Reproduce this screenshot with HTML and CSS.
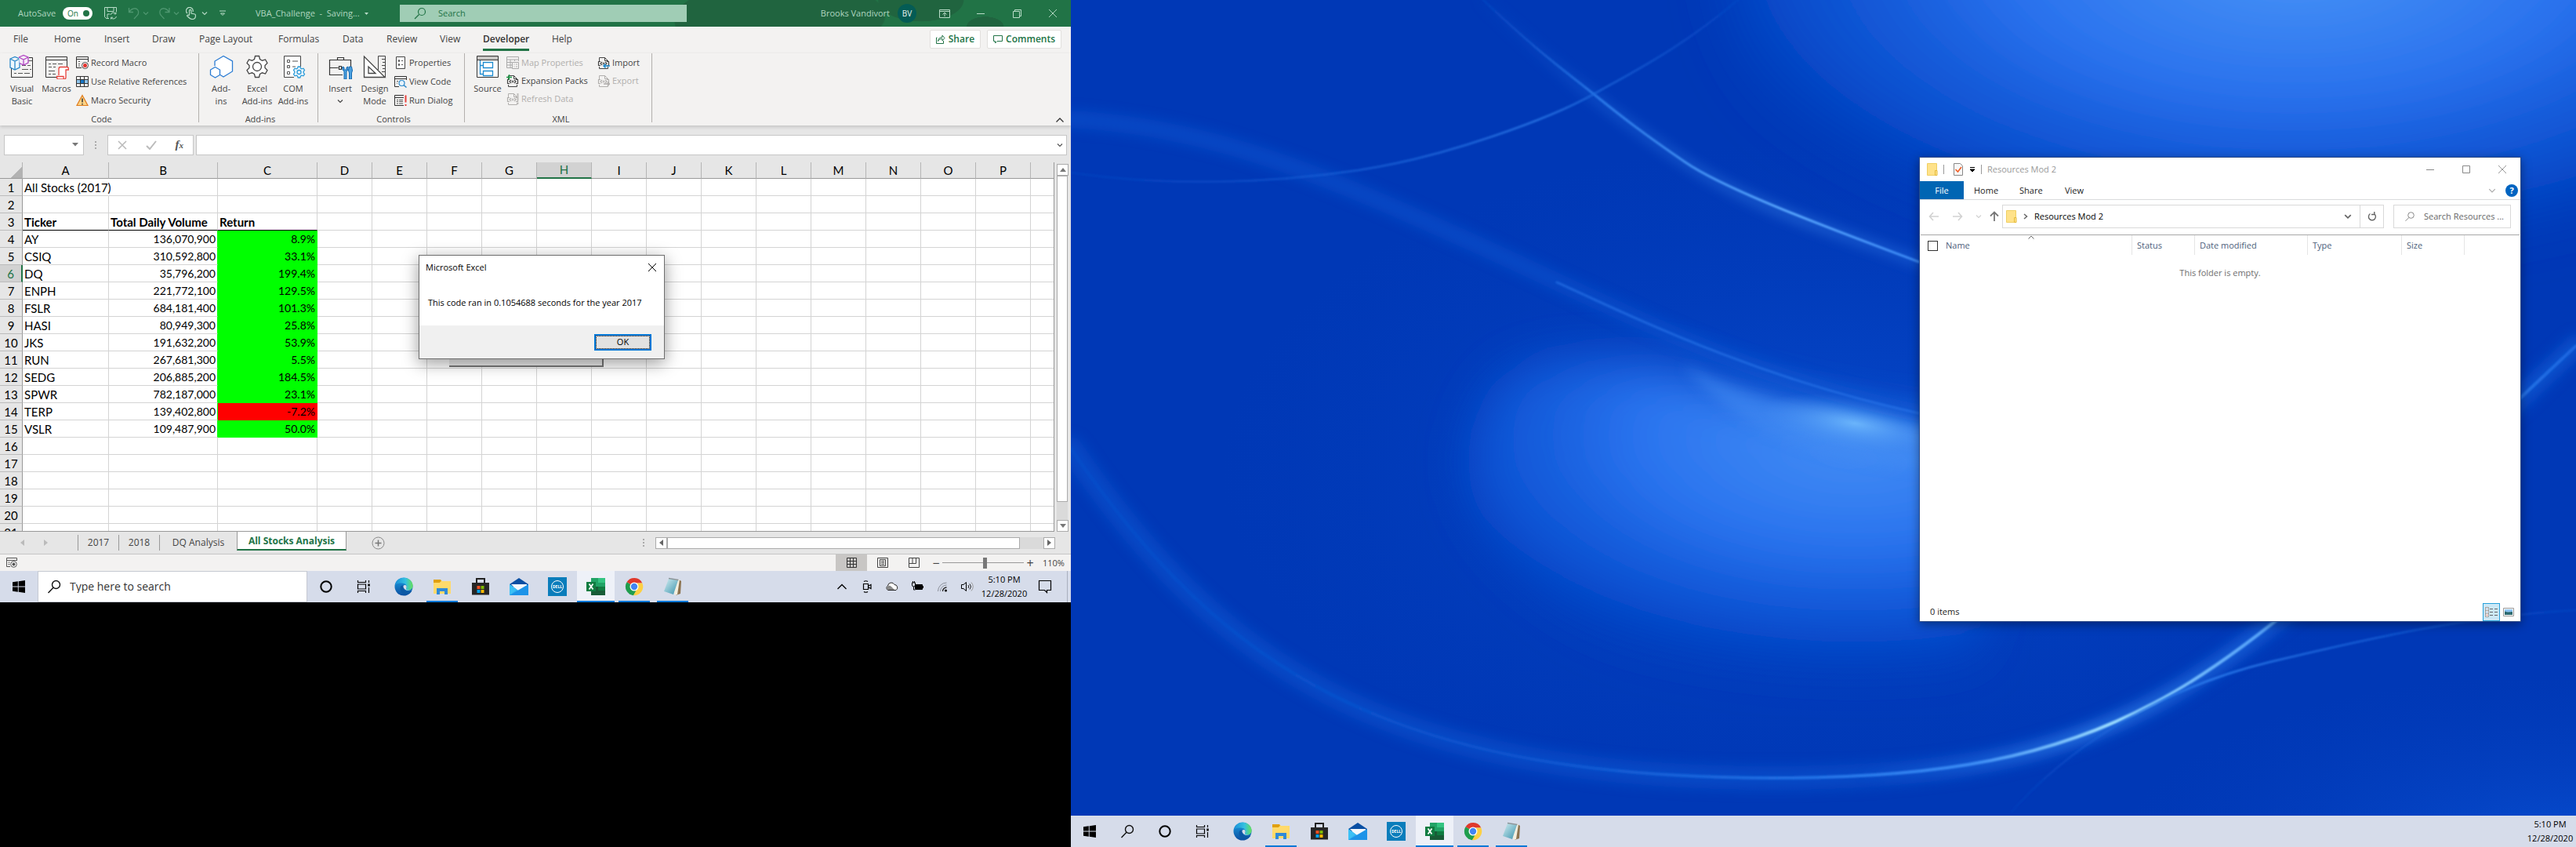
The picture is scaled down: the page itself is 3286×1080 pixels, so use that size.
FILE: index.html
```html
<!DOCTYPE html>
<html lang="en">
<head>
<meta charset="utf-8">
<title>VBA_Challenge - Excel</title>
<link rel="stylesheet" href="styles.css">
</head>
<body>
<svg class="sprite" aria-hidden="true">
  <defs>
    <linearGradient id="edge-a" x1="0" y1="0" x2="1" y2="0"><stop offset="0" stop-color="#1a8fd8"/><stop offset=".6" stop-color="#35c1e0"/><stop offset="1" stop-color="#66e05a"/></linearGradient>
    <linearGradient id="edge-b" x1="0" y1="0" x2="0" y2="1"><stop offset="0" stop-color="#1b9de2"/><stop offset="1" stop-color="#0b4fa0"/></linearGradient>
    <linearGradient id="note-a" x1="0" y1="0" x2="1" y2="1"><stop offset="0" stop-color="#d3eef2"/><stop offset="1" stop-color="#3b93ad"/></linearGradient>
  </defs>
  <symbol id="i-start" viewBox="0 0 24 24"><path d="M4 6.3l6.8-1v6.2H4zM11.700 5.200L20 4v7.500h-8.300zM4 12.500h6.800v6.200l-6.800-1zM11.700 12.500H20V20l-8.300-1.200z" fill="#000"/></symbol>
  <symbol id="i-search" viewBox="0 0 24 24"><g fill="none" stroke="#111" stroke-width="1.400"><circle cx="14.500" cy="9.500" r="5"/><path d="M11 13.200L4.500 20"/></g></symbol>
  <symbol id="i-cortana" viewBox="0 0 24 24"><circle cx="12" cy="12" r="6.700" fill="none" stroke="#000" stroke-width="2"/></symbol>
  <symbol id="i-task" viewBox="0 0 24 24"><g fill="none" stroke="#000" stroke-width="1.200"><path d="M4.500 4v2.500h10V4M4.500 20v-2.500h10V20M4.500 9h10v6h-10zM18.500 4v3M18.500 13v7"/></g><path d="M17.300 8.500h2.500v3h-2.500z"/></symbol>
  <symbol id="i-edge" viewBox="0 0 24 24"><circle cx="12" cy="12" r="11.500" fill="url(#edge-b)"/><path d="M1 10C3 2.500 10-.8 16 1.300c5 1.700 8 6 7.500 10.200-.4 3.500-3 5.200-6 5.200-2.500 0-3.500-1.200-2.500-2.500 1.500-2 .5-5.500-3-6.200C7 7 2.500 8 1 10z" fill="url(#edge-a)"/><path d="M8 12c-1.500 4 1 8.500 5.500 9.500 4 .8 7.500-1.500 9-4-3 1.500-7 1.500-9-.5-1.500-1.500-1.500-3 0-5-1.500-2-4.500-2-5.500 0z" fill="#0c59a4"/><path d="M15 14.200c1.300-2 .4-4.200-1.700-4.200-2.200 0-2.700 3 .2 5.500 1.800 1.600 5.500 2 8.500.3-2 1.100-7.800 1.400-7-1.600z" fill="#d6dcea"/></symbol>
  <symbol id="i-folder" viewBox="0 0 24 24"><path d="M1 3h9l2 2h11v16H1z" fill="#ffd75e"/><path d="M1 3h9l1 2-2 2H1z" fill="#e0a010"/><path d="M1 7h8l2-2h12v16H1z" fill="#ffda6b"/><path d="M5 14h14v8h-4v-4H9v4H5z" fill="#2f8ad8"/></symbol>
  <symbol id="i-store" viewBox="0 0 24 24"><path d="M7 8V2h10v6" fill="none" stroke="#222" stroke-width="2"/><path d="M1 7h22v15.500H1z" fill="#262626"/><path d="M7.500 11h4v4h-4z" fill="#f25022"/><path d="M12.500 11h4v4h-4z" fill="#7fba00"/><path d="M7.500 16h4v4h-4z" fill="#00a4ef"/><path d="M12.500 16h4v4h-4z" fill="#ffb900"/></symbol>
  <symbol id="i-mail" viewBox="0 0 24 24"><path d="M0 9l12-8 12 8v3H0z" fill="#0a4fa3"/><path d="M2 9h20v6l-10 4z" fill="#f4f8fc"/><path d="M0 9l12 8.500V23H0z" fill="#32b3f0"/><path d="M24 9v14H0z" fill="#1d93e8"/><path d="M0 9l9 6.500L0 23z" fill="#3bc0f5"/></symbol>
  <symbol id="i-excel" viewBox="0 0 24 24"><path d="M6 1h18v22H6z" fill="#21a366"/><path d="M15 1h9v6h-9z" fill="#33c481"/><path d="M6 12h9v5H6z" fill="#185c37"/><path d="M15 12h9v5h-9z" fill="#107c41"/><path d="M6 17h18v6H6z" fill="#185c37"/><path d="M0 6h12v12H0z" fill="#107c41"/><path d="M3.500 8.500l5 7M8.500 8.500l-5 7" stroke="#fff" stroke-width="1.800"/></symbol>
  <symbol id="i-chrome" viewBox="0 0 24 24"><path d="M12 12L2.500 6.200A11.300 11.300 0 0 1 22.300 7.500H12z" fill="#e0392c"/><path d="M12 12L2.500 6.200A11.300 11.300 0 0 0 11 23.300l4-6z" fill="#1f9d4d"/><path d="M22.300 7.500A11.300 11.300 0 0 1 11 23.300L16 14V7.500z" fill="#fdd043"/><circle cx="12" cy="12" r="5.500" fill="#fff"/><circle cx="12" cy="12" r="4.200" fill="#4285f4"/></symbol>
  <symbol id="i-note" viewBox="0 0 24 24"><path d="M20 3l3 2-1 16-6 2z" fill="#8c7350"/><path d="M8 2l13 1-3 19-3 1z" fill="#f3efe0"/><path d="M7 2l12 2-6 18L1 18z" fill="url(#note-a)"/><path d="M7 1.500l12.500 2" stroke="#8a9499" stroke-width="1.500"/></symbol>
  <symbol id="i-down" viewBox="0 0 8 8"><path d="M1 2.500l3 3 3-3" fill="none" stroke="currentColor" stroke-width="1.200"/></symbol>
  <symbol id="i-x" viewBox="0 0 12 12"><path d="M1 1l10 10M11 1L1 11" fill="none" stroke="currentColor"/></symbol>
  <symbol id="i-dir" viewBox="0 0 14 16"><path d="M.5.500h12v15H.500z" fill="#ffe28a" stroke="#f0cf62"/><path d="M10.500 9.500h2.500v6h-2.500z" fill="#ffe28a" stroke="#e5bb3b"/></symbol>
  <symbol id="i-xml" viewBox="0 0 16 16"><g fill="none" stroke="currentColor"><path d="M2.500 6V1.500h7l4 4V6M9.500 1.500v4h4M2.500 13v2.500h11V13"/><path d="M4 6.500H1.500v5H4M12 6.500h2.500v5H12M6 7L4 9l2 2M10 7l2 2-2 2" stroke-width="1.200"/><circle cx="8" cy="9" r="1"/></g></symbol>
</svg>

<main class="desktop">
  <section class="screen laptop" aria-label="Laptop screen">
    <div class="excel">
      <header class="titlebar">
        <div class="quick">
          <span>AutoSave</span>
          <button class="switch" role="switch" aria-checked="true"><span>On</span><i></i></button>
          <button aria-label="Save"><svg width="16" height="16" viewBox="0 0 16 16"><path d="M6 14.500H2.500l-2-2V.5h15V6M4 .5v5h8v-5M4 14v-5h3M8 10a4 4 0 0 1 7-1.500V6.500M15 8.800h-2.500M15.500 12a4 4 0 0 1-7 1.500v2M8.500 13.200H11" fill="none" stroke="#b9dcc8"/></svg></button>
          <button aria-label="Undo"><svg width="16" height="16" viewBox="0 0 16 16"><path d="M1.500 1v5.500H7M1.500 6.500C5 1 11 .5 13 4s.5 5.500-5 11" fill="none" stroke="#4f9770" stroke-width="1.300"/></svg></button>
          <button class="dim" aria-label="Undo list"><svg width="8" height="8"><use href="#i-down"/></svg></button>
          <button aria-label="Redo"><svg width="16" height="16" viewBox="0 0 16 16"><path d="M14 1v5.500H8.500M14 6.500C10.500 1 4.500.500 2.500 4S2 9.500 7.500 15" fill="none" stroke="#4f9770" stroke-width="1.300"/></svg></button>
          <button class="dim" aria-label="Redo list"><svg width="8" height="8"><use href="#i-down"/></svg></button>
          <button aria-label="Touch mode"><svg width="14" height="16" viewBox="0 0 14 16"><path d="M2 8a4.300 4.300 0 1 1 7-2M4.500 10V4.500a1.200 1.200 0 0 1 2.400 0V8l4.600 1c1 .3 1 1 1 2 0 2.500-1.500 4.500-4.500 4.500S4 13.500 1.500 11c1-1.500 2-1 3 0" fill="none" stroke="#b9dcc8" stroke-width="1.200"/></svg></button>
          <button aria-label="Touch list"><svg width="8" height="8"><use href="#i-down"/></svg></button>
          <button aria-label="Customize toolbar"><svg width="8" height="8" viewBox="0 0 8 8"><path d="M0 1h8M1.500 4L4 6.500 6.500 4z" stroke="#b9dcc8" fill="none"/></svg></button>
          <span>VBA_Challenge&nbsp; -&nbsp; Saving...&nbsp; <svg width="7" height="4" viewBox="0 0 7 4" class="mid"><path d="M1 0h5L3.500 3z" fill="#b9dcc8"/></svg></span>
        </div>
        <label class="tellme"><svg width="16" height="16" viewBox="0 0 16 16"><circle cx="10" cy="6" r="4.500" fill="none" stroke="#217346" stroke-width="1.200"/><path d="M6.500 9.500L1 15" stroke="#217346" stroke-width="1.200"/></svg><input type="text" placeholder="Search" aria-label="Search"></label>
        <div class="account">
          <span>Brooks Vandivort</span><span class="avatar">BV</span>
          <button aria-label="Ribbon display"><svg width="14" height="11" viewBox="0 0 14 11"><path d="M.5.500h13v10H.500zM.5 2.500h13M7 9V4M4.500 6.500L7 4l2.500 2.500" fill="none" stroke="#b9dcc8"/></svg></button>
          <button aria-label="Minimize"><svg width="10" height="10"><path d="M0 5.500h10" stroke="#b9dcc8"/></svg></button>
          <button aria-label="Restore"><svg width="11" height="11"><path d="M.5 2.500h8v8h-8zM2.500 2.500v-2h8v8h-2" fill="none" stroke="#b9dcc8"/></svg></button>
          <button aria-label="Close"><svg width="12" height="12"><use href="#i-x"/></svg></button>
        </div>
      </header>

      <div class="tabrow">
        <nav class="tabs">
          <a href="#">File</a><a href="#">Home</a><a href="#">Insert</a><a href="#">Draw</a><a href="#">Page Layout</a><a href="#">Formulas</a><a href="#">Data</a><a href="#">Review</a><a href="#">View</a><a href="#" class="on">Developer</a><a href="#">Help</a>
        </nav>
        <button class="pill"><svg width="12" height="12" viewBox="0 0 12 12"><path d="M1.500 4H.500v7.500h9V8M2.500 8.500C3 5 5 3.500 8 3.500V1l3 3.500L8 8V5.500C5.500 5.500 4 6 2.500 8.500z" fill="none" stroke="#217346"/></svg>Share</button>
        <button class="pill"><svg width="12" height="12" viewBox="0 0 12 12"><path d="M.5 1.500h11v7H5L2.500 11V8.500h-2z" fill="none" stroke="#217346"/></svg>Comments</button>
      </div>

      <div class="ribbon">
        <section class="group code">
          <div class="tools">
            <button class="big"><svg width="32" height="32" viewBox="0 0 32 32"><path d="M2.500 17v12.500h27v-25H25" fill="none" stroke="#333"/><path d="M24 8.500h5M16 14.500h5M23 14.500h4M16 19.500h8M26 19.500h2M6 24.500h3M11 24.500h6M19 24.500h7" stroke="#555"/><path d="M1 6l6-2.500L13 6v11l-6 3-6-3zM1 6l6 3 6-3M7 9v11" fill="#eef7fd" stroke="#2b88c9" stroke-width="1.300"/><path d="M12 4l6-2.500L24 4v7l-6 3-5-2.500M12 4l6 3 6-3M18 7v7" fill="#f6eaf8" stroke="#b146c2" stroke-width="1.300"/></svg>Visual<br>Basic</button>
            <button class="big"><svg width="32" height="32" viewBox="0 0 32 32"><path d="M17 29.500H2.500v-26h27V16M2.500 7.500h27" fill="none" stroke="#333"/><path d="M6 12.500h3M11 12.500h5M18 12.500h6M6 16.500h4M12 16.500h3M6 21.500h8M6 25.500h3M11 25.500h4" stroke="#555"/><path d="M19 27V19c0-2 1-2.500 2-2.500h9c1 0 1.500 1 1.500 3.500H28v9.500c0 2-1 2.500-2 2.500h-8c-1.500 0-1.500-2-1.500-3.500H25c0 2 0 3 1 3.500" fill="#fff" stroke="#e8413c" stroke-width="1.300"/></svg>Macros</button>
            <div class="stack">
              <button><svg width="16" height="16" viewBox="0 0 16 16"><path d="M7 14.500H.500V.500h15V7M.5 3.500h15" fill="none" stroke="#333"/><path d="M3 6.500h2M3 9.500h2M3 12h2" stroke="#555"/><circle cx="11.500" cy="11.500" r="4" fill="#fff" stroke="#444"/><circle cx="11.500" cy="11.500" r="2.500" fill="#e3322d"/></svg>Record Macro</button>
              <button><svg width="16" height="16" viewBox="0 0 16 16"><path d="M1 5h14v5H1z" fill="#8fc4ec"/><path d="M5.500 5h5v5h-5z" fill="#1976c5"/><path d="M.5 1.500h15v13H.500zM.5 5.500h15M.5 10.500h15M5.500 1v13M10.500 1v13" fill="none" stroke="#333"/></svg>Use Relative References</button>
              <button><svg width="16" height="16" viewBox="0 0 16 16"><path d="M8 1.500l7 13H1z" fill="#fbd385" stroke="#e07b1c" stroke-width="1.200"/><path d="M8 5.500v5M8 12v1.500" stroke="#333" stroke-width="1.500"/></svg>Macro Security</button>
            </div>
          </div>
          <h2>Code</h2>
        </section>
        <section class="group addins">
          <div class="tools">
            <button class="big"><svg width="32" height="32" viewBox="0 0 32 32"><path d="M8 15V9l11-6.500L30.500 9v13L19 29l-4-2.500" fill="#fff" stroke="#2b7cd3" stroke-width="1.300"/><path d="M8.500 16.500l6 3.500v6.500L8.500 30l-6-3.500V20z" fill="#fff" stroke="#2b7cd3" stroke-width="1.300"/></svg>Add-<br>ins</button>
            <button class="big"><svg width="32" height="32" viewBox="0 0 32 32"><path d="M12.500 6.500l1-4h5l1 4 3 1.700 4-1.200 2.500 4.500-3 3v3l3 3-2.500 4.500-4-1.200-3 1.700-1 4h-5l-1-4-3-1.700-4 1.200L3 20.500l3-3v-3l-3-3L5.500 7l4 1.200z" fill="#fff" stroke="#444" stroke-width="1.300"/><circle cx="16" cy="16" r="5.500" fill="none" stroke="#444" stroke-width="1.300"/></svg>Excel<br>Add-ins</button>
            <button class="big"><svg width="32" height="32" viewBox="0 0 32 32"><path d="M17 29.500H4.500v-27h21V16" fill="#fff" stroke="#444"/><path d="M8.500 7.500h3v3h-3zM8.500 14.500h3v3h-3zM8.500 22.500h3v3h-3zM15 9h7M15 16h4" fill="none" stroke="#555"/><path d="M21.500 18l.7-2h2.600l.7 2 1.500.8 2-.6 1.500 2.300-1.300 1.700v1.600l1.300 1.700-1.500 2.300-2-.6-1.500.8-.7 2h-2.600l-.7-2-1.500-.8-2 .6-1.500-2.300 1.300-1.700v-1.600l-1.300-1.700 1.500-2.300 2 .6z" fill="#eef7fd" stroke="#2b9bd8" stroke-width="1.300"/><circle cx="23.500" cy="23" r="2.500" fill="none" stroke="#2b9bd8" stroke-width="1.300"/></svg>COM<br>Add-ins</button>
          </div>
          <h2>Add-ins</h2>
        </section>
        <section class="group controls">
          <div class="tools">
            <button class="big"><svg width="32" height="32" viewBox="0 0 32 32"><path d="M19 26.500H2.500v-19h27V16M12.500 7V4.500h8V7M2.500 17.500h11M18 17.500h3M14.500 15.500h3v4h-3z" fill="none" stroke="#333" stroke-width="1.200"/><path d="M19 16v4l2 2v10h3V22l2-2v-4l-2 1v3h-3v-3zM29 16h1.500l1 5-1 3v8h-3v-8l-1-3 1-5z" fill="#4aa0e0" stroke="#1569b0"/></svg>Insert<br><svg width="8" height="8"><use href="#i-down"/></svg></button>
            <button class="big"><svg width="32" height="32" viewBox="0 0 32 32"><path d="M2.500 3v26.500H29zM8 16v8.500h9z" fill="#fff" stroke="#444" stroke-width="1.300"/><path d="M20.500 20V2.500h9v27M25 6.500h4M26 10.500h3M25 14.500h4M26 18.500h3M25 22.500h4" fill="none" stroke="#444"/></svg>Design<br>Mode</button>
            <div class="stack">
              <button><svg width="16" height="16" viewBox="0 0 16 16"><path d="M2.500.500h11v15h-11z" fill="#fff" stroke="#444"/><path d="M5.500 4.500h1v2h-1zM5.500 9.500h1v2h-1zM9 5.500h2M9 10.500h2" fill="none" stroke="#555"/></svg>Properties</button>
              <button><svg width="16" height="16" viewBox="0 0 16 16"><path d="M6 14.500H.500v-13h15V6M.5 4.500h15" fill="none" stroke="#333"/><path d="M3 7.500h2M3 10h1M7 7h1" stroke="#555"/><circle cx="9.500" cy="10" r="3.500" fill="#e6f3fc" stroke="#2b88c9" stroke-width="1.200"/><path d="M12 12.500l3.500 3" stroke="#2b88c9" stroke-width="1.500"/></svg>View Code</button>
              <button><svg width="16" height="16" viewBox="0 0 16 16"><path d="M12 14.500H.500v-13H12M.5 4.500H12" fill="none" stroke="#333"/><path d="M3 7.500h2M6 7.500h5M3 9.500h2M6 9.500h5M3 12h2M6 12h5" stroke="#555"/><path d="M14.500 1.500v9M14.500 13v2" stroke="#e8413c" stroke-width="2"/></svg>Run Dialog</button>
            </div>
          </div>
          <h2>Controls</h2>
        </section>
        <section class="group xml">
          <div class="tools">
            <button class="big"><svg width="32" height="32" viewBox="0 0 32 32"><path d="M2.500 2.500h27v27h-27z" fill="#fff" stroke="#333"/><path d="M3 3h26v4H3z" fill="#c8c6c4"/><path d="M2.500 7.500h27" stroke="#333"/><path d="M6.500 8v17.500h4M6.500 14.500h4M10.500 10.500h12v7h-12zM10.500 21.500h12v6h-12z" fill="none" stroke="#1e8bd0" stroke-width="1.300"/></svg>Source</button>
            <div class="stack tight">
              <button disabled><svg width="16" height="16" viewBox="0 0 16 16"><path d="M7 14.500H.500V.500h15V6M.5 4h15M.5 7.500H7M.5 11H7M5 4v10M10.500 4v2" fill="none" stroke="#aaa"/><path d="M7.500 7.500h8v8h-8zM9.500 10h1M12 10h2M9.500 13h1M12 13h2" fill="none" stroke="#aaa"/></svg>Map Properties</button>
              <button><svg width="16" height="16"><use href="#i-xml"/><path d="M0 3.500h7M3.500 0v7" stroke="#1e9e4a" stroke-width="1.300"/></svg>Expansion Packs</button>
              <button disabled><svg width="16" height="16"><use href="#i-xml"/><path d="M14.500 1v9M14.500 12.500v2.500" stroke="#c0bebc" stroke-width="2"/></svg>Refresh Data</button>
            </div>
            <div class="stack tight">
              <button><svg width="16" height="16"><use href="#i-xml"/><path d="M16 12H8M10.500 9.500L8 12l2.500 2.500" fill="none" stroke="#1e8bd0" stroke-width="1.500"/></svg>Import</button>
              <button disabled><svg width="16" height="16"><use href="#i-xml"/><path d="M8 12h8M13 9.500l2.500 2.500-2.500 2.500" fill="none" stroke="#b1afad" stroke-width="1.500"/></svg>Export</button>
            </div>
          </div>
          <h2>XML</h2>
        </section>
        <button class="collapse" aria-label="Collapse ribbon"><svg width="10" height="6"><path d="M.5 5.500L5 1l4.500 4.500" fill="none" stroke="#333" stroke-width="1.300"/></svg></button>
      </div>

      <div class="formulabar">
        <label class="box namebox"><input type="text" aria-label="Name box"><svg width="8" height="5"><path d="M0 0h8L4 4.500z" fill="#777"/></svg></label>
        <span class="grip"></span>
        <div class="box fxbox">
          <button aria-label="Cancel"><svg width="12" height="12" viewBox="0 0 12 12"><path d="M1 1l10 10M11 1L1 11" stroke="#bbb" stroke-width="1.600"/></svg></button>
          <button aria-label="Enter"><svg width="14" height="12" viewBox="0 0 14 12"><path d="M1 7l4 4L13 1" fill="none" stroke="#bbb" stroke-width="2"/></svg></button>
          <button aria-label="Insert function" class="fx">f<sub>x</sub></button>
        </div>
        <label class="box formula"><input type="text" aria-label="Formula"><svg width="8" height="8" class="dark"><use href="#i-down"/></svg></label>
      </div>

      <div class="work">
        <div class="sheet">
          <table>
            <colgroup id="cols"></colgroup>
            <thead><tr id="letters"></tr></thead>
            <tbody id="rows"></tbody>
          </table>
          <div class="runbtn"></div>
        </div>
        <div class="vscroll"><button aria-label="Scroll up"><svg width="8" height="5"><path d="M0 5h8L4 0z" fill="#777"/></svg></button><i class="thumb"></i><i class="track"></i><button aria-label="Scroll down"><svg width="8" height="5"><path d="M0 0h8L4 5z" fill="#777"/></svg></button></div>
      </div>

      <div class="sheettabs">
        <div class="arrows"><svg width="5" height="8"><path d="M5 0v8L0 4z" fill="#bbb"/></svg><svg width="5" height="8"><path d="M0 0v8l5-4z" fill="#bbb"/></svg></div>
        <button>2017</button><button>2018</button><button class="wide">DQ Analysis</button><button class="active">All Stocks Analysis</button>
        <button class="plus" aria-label="New sheet"><svg width="17" height="17" viewBox="0 0 17 17"><circle cx="8.500" cy="8.500" r="7.500" fill="none" stroke="#888"/><path d="M8.500 4.500v8M4.500 8.500h8" stroke="#777" stroke-width="1.500"/></svg></button>
        <span class="grip"></span>
        <div class="hscroll"><button aria-label="Scroll left"><svg width="5" height="8"><path d="M5 0v8L0 4z" fill="#666"/></svg></button><i class="thumb"></i><i class="track"></i><button aria-label="Scroll right"><svg width="5" height="8"><path d="M0 0v8l5-4z" fill="#666"/></svg></button></div>
      </div>

      <footer class="status">
        <svg class="rec" width="14" height="13" viewBox="0 0 14 13"><path d="M5 11.500H.500V.500h13V4M.5 3.500h13M2.500 6h2M2.500 8.500h2" fill="none" stroke="#555"/><circle cx="9.500" cy="8.500" r="3.800" fill="#fff" stroke="#555"/><circle cx="9.500" cy="8.500" r="2" fill="#555"/></svg>
        <button class="on" aria-label="Normal view"><svg width="13" height="13"><path d="M.5.500h12v12H.500zM.5 4.500h12M.5 8.500h12M4.500 0v13M8.500 0v13" fill="none" stroke="#333"/></svg></button>
        <button aria-label="Page layout view"><svg width="14" height="13"><path d="M.5.500h13v12H.500zM3.500 2.500h7v8h-7zM5 4.500h4M5 6.500h4M5 8.500h4" fill="none" stroke="#444"/></svg></button>
        <button aria-label="Page break view"><svg width="14" height="13"><path d="M.5.500h13v12H.500zM.5 7.500h9v-7M5 0v7" fill="none" stroke="#444"/></svg></button>
        <span class="sign">−</span><input type="range" min="0" max="100" value="53" aria-label="Zoom"><span class="sign">+</span><span class="pct">110%</span>
      </footer>
    </div>

    <div class="dialog" role="dialog" aria-labelledby="dlg">
      <div class="dlghead"><span id="dlg">Microsoft Excel</span><button aria-label="Close"><svg width="12" height="12"><use href="#i-x"/></svg></button></div>
      <p>This code ran in 0.1054688 seconds for the year 2017</p>
      <div class="dlgfoot"><button>OK</button></div>
    </div>

    <nav class="taskbar" aria-label="Taskbar">
      <button aria-label="Start"><svg><use href="#i-start"/></svg></button>
      <label class="tasksearch"><svg width="24" height="24"><use href="#i-search"/></svg><input type="text" placeholder="Type here to search" aria-label="Type here to search"></label>
      <button aria-label="Cortana"><svg><use href="#i-cortana"/></svg></button>
      <button aria-label="Task view"><svg><use href="#i-task"/></svg></button>
      <div class="apps">
        <button aria-label="Edge"><svg><use href="#i-edge"/></svg></button>
        <button class="run" aria-label="File Explorer"><svg><use href="#i-folder"/></svg></button>
        <button aria-label="Store"><svg><use href="#i-store"/></svg></button>
        <button aria-label="Mail"><svg><use href="#i-mail"/></svg></button>
        <button aria-label="Dell"><svg viewBox="0 0 24 24"><path d="M0 0h24v24H0z" fill="#0a7dbb"/><circle cx="12" cy="12" r="7.500" fill="none" stroke="#fff"/><text x="12" y="14" class="dell">DELL</text></svg></button>
        <button class="run cur" aria-label="Excel"><svg><use href="#i-excel"/></svg></button>
        <button class="run" aria-label="Chrome"><svg><use href="#i-chrome"/></svg></button>
        <button class="run" aria-label="Notepad"><svg><use href="#i-note"/></svg></button>
      </div>
      <div class="tray">
        <svg viewBox="0 0 16 16"><path d="M2.500 11L8 5.500l5.500 5.500" fill="none" stroke="#000" stroke-width="1.300"/></svg>
        <svg viewBox="0 0 16 16"><path d="M3.500 4.500h6v7h-6zM10 7l3-1.500v5L10 9M4 1.500q2.500-1.500 5 0M4 14.500q2.500 1.500 5 0" fill="none" stroke="#000" stroke-width="1.200"/></svg>
        <svg viewBox="0 0 16 16"><path d="M3 12.500a3 3 0 0 1-.5-5.500A4.500 4.500 0 0 1 11 5.500a3.800 3.800 0 0 1 2 7z" fill="#fff" stroke="#222"/><path d="M3 12a3 3 0 0 1 0-5 4 4 0 0 1 4 1l4 4z" fill="#888"/></svg>
        <svg viewBox="0 0 16 16"><path d="M5.500 5.500h9v6h-9z" fill="#000" stroke="#000"/><path d="M15.500 7v3" stroke="#000"/><path d="M1.500 3v3a2 2 0 0 0 4 0V3zM2.500 1v2M4.500 1v2M3.500 8v4h2" fill="#d6dcea" stroke="#000"/></svg>
        <svg viewBox="0 0 16 16"><g fill="none"><path d="M2.500 14A11 11 0 0 1 13.500 3" stroke="#8a8f99"/><path d="M5.500 14a8 8 0 0 1 8-8" stroke="#8a8f99"/><path d="M8.500 14a5 5 0 0 1 5-5" stroke="#222" stroke-width="1.300"/></g><circle cx="12.500" cy="13" r="1.500"/></svg>
        <svg viewBox="0 0 16 16"><path d="M.5 5.500h2.500l3.500-3v11L3 10.500H.500z" fill="none" stroke="#000"/><path d="M9 6q1.500 2 0 4M11 4.500q3 3.500 0 7" fill="none" stroke="#222"/><path d="M13 2.500q4.500 5.500 0 11" fill="none" stroke="#999"/></svg>
      </div>
      <time class="clock">5:10 PM<br>12/28/2020</time>
      <button class="action" aria-label="Notifications"><svg viewBox="0 0 24 24"><path d="M4.500 4.500h15v12h-5v3l-3-3h-7z" fill="none" stroke="#000" stroke-width="1.200"/></svg></button>
    </nav>
  </section>

  <section class="screen monitor" aria-label="External monitor">
    <div class="wall">
      <svg class="wallpaper" viewBox="0 0 1920 1040" preserveAspectRatio="xMidYMid slice" aria-hidden="true">
        <defs>
          <radialGradient id="g-top" gradientUnits="userSpaceOnUse" cx="0" cy="0" r="1" gradientTransform="translate(1560 -60) scale(820 400)"><stop offset="0" stop-color="#4a96f7"/><stop offset=".45" stop-color="#2a72ee"/><stop offset=".8" stop-color="#0b52d2" stop-opacity=".8"/><stop offset="1" stop-color="#0440c0" stop-opacity="0"/></radialGradient>
          <radialGradient id="g-mid" gradientUnits="userSpaceOnUse" cx="0" cy="0" r="1" gradientTransform="translate(1000 555) scale(620 310)"><stop offset="0" stop-color="#458ff5"/><stop offset=".45" stop-color="#2a74ef"/><stop offset=".8" stop-color="#0b54d6" stop-opacity=".8"/><stop offset="1" stop-color="#0440c0" stop-opacity="0"/></radialGradient>
          <radialGradient id="g-halo"><stop offset="0" stop-color="#0a55da"/><stop offset="1" stop-color="#0440c0" stop-opacity="0"/></radialGradient>
          <radialGradient id="g-spot"><stop offset="0" stop-color="#6ab4fb"/><stop offset="1" stop-color="#4a94f6" stop-opacity="0"/></radialGradient>
          <linearGradient id="s-big" gradientUnits="userSpaceOnUse" x1="0" y1="0" x2="1920" y2="0"><stop offset="0" stop-color="#0f5cd6" stop-opacity=".2"/><stop offset=".3" stop-color="#1260d8" stop-opacity=".5"/><stop offset=".5" stop-color="#2474e8"/><stop offset=".6" stop-color="#3c8cf5"/><stop offset=".69" stop-color="#9adcff"/><stop offset=".78" stop-color="#5aa6fa"/><stop offset="1" stop-color="#1a66e0"/></linearGradient>
          <linearGradient id="s-glow" gradientUnits="userSpaceOnUse" x1="1000" y1="0" x2="1600" y2="0"><stop offset="0" stop-color="#3a88f5" stop-opacity="0"/><stop offset=".5" stop-color="#4fa0ff"/><stop offset="1" stop-color="#3a88f5" stop-opacity=".3"/></linearGradient>
          <linearGradient id="s-up" gradientUnits="userSpaceOnUse" x1="500" y1="0" x2="1082" y2="0"><stop offset="0" stop-color="#0a4cc8" stop-opacity=".2"/><stop offset=".3" stop-color="#2a78e8"/><stop offset=".72" stop-color="#5aa8ff"/><stop offset="1" stop-color="#3a88f5"/></linearGradient>
          <linearGradient id="s-left" gradientUnits="userSpaceOnUse" x1="0" y1="0" x2="851" y2="0"><stop offset="0" stop-color="#0c50cc" stop-opacity=".3"/><stop offset=".7" stop-color="#2a76e6"/><stop offset="1" stop-color="#0c50cc" stop-opacity=".4"/></linearGradient>
          <linearGradient id="s-low" gradientUnits="userSpaceOnUse" x1="1200" y1="0" x2="1920" y2="0"><stop offset="0" stop-color="#0c50cc" stop-opacity=".2"/><stop offset=".35" stop-color="#2f80f0"/><stop offset="1" stop-color="#0c50cc" stop-opacity=".4"/></linearGradient>
          <filter id="soft" x="-30%" y="-30%" width="160%" height="160%"><feGaussianBlur stdDeviation="30"/></filter>
          <filter id="soft-s" x="-20%" y="-20%" width="140%" height="140%"><feGaussianBlur stdDeviation="8"/></filter>
          <filter id="soft-xs" x="-5%" y="-5%" width="110%" height="110%"><feGaussianBlur stdDeviation="1"/></filter>
          <path id="c-big" d="M0 572C49 658 96 745 147 806S245 885 306 905s127 45 184 52 122 35 183 34 130-3 221-17 126-15 183-31 200-75 294-176"/>
        </defs>
        <rect width="1920" height="1040" fill="#0038b6"/>
        <ellipse cx="950" cy="600" rx="760" ry="420" fill="url(#g-halo)" opacity=".6"/>
        <ellipse cx="1900" cy="1080" rx="560" ry="220" fill="url(#g-halo)" opacity=".7"/>
        <path d="M820-100C820 40 850 100 900 150c130 90 260 150 420 175 300 60 600 20 800-60V-100z" fill="url(#g-top)" filter="url(#soft)"/>
        <path d="M526 520C550 450 650 450 760 470c120 40 240 70 400 80v330c-200 30-420 0-560-130-100-90-110-160-74-230z" fill="url(#g-mid)" filter="url(#soft)"/>
        <path d="M780 465c100 50 200 70 340 85v50c-140-5-260-40-340-135z" fill="#4690f5" opacity=".5" filter="url(#soft-s)"/>
        <ellipse cx="1000" cy="540" rx="120" ry="34" transform="rotate(9 1000 540)" fill="url(#g-spot)"/>
        <g fill="none" stroke-linecap="round">
          <path d="M0 572C190 850 400 991 894 992S1480 850 1920 441" stroke="#0c58d4" stroke-width="30" opacity=".5" filter="url(#soft-s)"/>
          <path d="M0 152c180 10 320 70 514 158s340 170 568 217" stroke="#0c58d4" stroke-width="22" opacity=".5" filter="url(#soft-s)"/>
          <path d="M0 572C190 850 400 991 894 992S1480 850 1920 441" stroke="url(#s-glow)" stroke-width="14" opacity=".5" filter="url(#soft-s)"/>
          <path d="M0 572C190 850 400 991 894 992S1480 850 1920 441" stroke="url(#s-big)" stroke-width="4" filter="url(#soft-xs)"/>
          <path d="M526 0C620 90 690 145 784 207s200 90 298 127" stroke="url(#s-up)" stroke-width="12" opacity=".35" filter="url(#soft-s)"/>
          <path d="M526 0C600 70 630 90 667 120S730 170 784 207s200 90 298 127" stroke="url(#s-up)" stroke-width="3" filter="url(#soft-xs)"/>
          <path d="M851 0C780 60 720 90 667 120S480 200 367 217 120 238 0 220" stroke="url(#s-left)" stroke-width="3" opacity=".8" filter="url(#soft-xs)"/>
          <path d="M620 360c130 60 270 125 462 167" stroke="#2a76ea" stroke-width="3" opacity=".6" filter="url(#soft-xs)"/>
          <path d="M1200 1035c80-90 200-160 330-191s250-58 390-66" stroke="url(#s-low)" stroke-width="3" opacity=".8" filter="url(#soft-xs)"/>
        </g>
      </svg>

      <div class="explorer">
        <div class="exhead">
          <svg width="14" height="16"><use href="#i-dir"/></svg><i class="bar"></i>
          <svg width="12" height="16" viewBox="0 0 12 16"><path d="M.5.500h8l3 3v12H.500z" fill="#f7f7f7" stroke="#888"/><path d="M2.500 8l3 3L10 5" fill="none" stroke="#f05a22" stroke-width="1.500"/></svg>
          <svg width="8" height="7"><path d="M1 .5h6M1 3h6L4 6z" stroke="#000"/></svg><i class="bar"></i>
          <span>Resources Mod 2</span>
          <div class="caption"><button aria-label="Minimize"><svg width="10" height="10"><path d="M0 5.500h10" stroke="#888"/></svg></button><button aria-label="Maximize"><svg width="10" height="10"><path d="M.5.500h9v9h-9z" fill="none" stroke="#888"/></svg></button><button aria-label="Close"><svg width="12" height="12"><use href="#i-x"/></svg></button></div>
        </div>
        <div class="extabs">
          <a href="#" class="file">File</a><a href="#">Home</a><a href="#">Share</a><a href="#">View</a>
          <div class="help"><svg width="10" height="10" viewBox="0 0 8 8"><path d="M1 2.500l3 3 3-3" fill="none" stroke="#aaa"/></svg><button>?</button></div>
        </div>
        <div class="exnav">
          <button aria-label="Back"><svg width="14" height="12"><path d="M13 6H1.500M6 1L1.500 6 6 11" fill="none" stroke="#d2d2d2" stroke-width="1.600"/></svg></button>
          <button aria-label="Forward"><svg width="14" height="12"><path d="M1 6h11.500M8 1l4.500 5L8 11" fill="none" stroke="#d2d2d2" stroke-width="1.600"/></svg></button>
          <button class="nar" aria-label="Recent"><svg width="8" height="8"><use href="#i-down"/></svg></button>
          <button class="nar" aria-label="Up"><svg width="12" height="13"><path d="M6 13V1.500M1 6.500l5-5 5 5" fill="none" stroke="#777" stroke-width="1.800"/></svg></button>
          <div class="address"><svg width="14" height="16"><use href="#i-dir"/></svg><svg width="6" height="8"><path d="M1 1l3.500 3L1 7" fill="none" stroke="#666" stroke-width="1.500"/></svg><span>Resources Mod 2</span><button aria-label="Previous locations"><svg width="10" height="10" viewBox="0 0 8 8"><path d="M1 2.500l3 3 3-3" fill="none" stroke="#666" stroke-width="1.400"/></svg></button><button class="refresh" aria-label="Refresh"><svg width="12" height="12" viewBox="0 0 12 12"><path d="M3.500 2.500A4.500 4.500 0 1 0 9 3M8.800 0v3.500H5" fill="none" stroke="#666" stroke-width="1.400"/></svg></button></div>
          <label class="exsearch"><svg width="12" height="12" viewBox="0 0 12 12"><circle cx="7.500" cy="4.500" r="3.800" fill="none" stroke="#888"/><path d="M4.800 7.500L.5 11.800" stroke="#888"/></svg><input type="text" placeholder="Search Resources ..." aria-label="Search Resources Mod 2"></label>
        </div>
        <div class="exlist">
          <table>
            <thead><tr>
              <th class="c-name"><input type="checkbox" aria-label="Select all">Name<svg class="sort" width="8" height="5"><path d="M.5 4.500L4 1l3.500 3.500" fill="none" stroke="#666"/></svg></th>
              <th class="c-status">Status</th><th class="c-date">Date modified</th><th class="c-type">Type</th><th class="c-size">Size</th><th class="c-rest"></th>
            </tr></thead>
          </table>
          <p>This folder is empty.</p>
        </div>
        <div class="exstatus"><span>0 items</span>
          <button class="on" aria-label="Details view"><svg width="16" height="13"><path d="M.5.500h4v4h-4zM.5 4.500h4v4h-4zM.5 8.500h4v4h-4z" fill="#fff" stroke="#999"/><path d="M2 2h1v1H2zM2 6h1v1H2z" fill="#2a70c0"/><path d="M2 10h1v1H2z" fill="#d03020"/><path d="M6 2.500h4M12 2.500h4M6 6.500h4M12 6.500h4M6 10.500h4M12 10.500h4" stroke="#666"/></svg></button>
          <button aria-label="Thumbnails"><svg width="14" height="11"><path d="M.5.500h13v10H.500z" fill="#fff" stroke="#999"/><path d="M2 2h10v4H2z" fill="#8cc4f5"/><path d="M2 4.500l4 1 6-.5v4H2z" fill="#2d6a70"/></svg></button>
        </div>
      </div>
    </div>

    <nav class="taskbar" aria-label="Second taskbar">
      <button aria-label="Start"><svg><use href="#i-start"/></svg></button>
      <button aria-label="Search"><svg><use href="#i-search"/></svg></button>
      <button aria-label="Cortana"><svg><use href="#i-cortana"/></svg></button>
      <button aria-label="Task view"><svg><use href="#i-task"/></svg></button>
      <div class="apps">
        <button aria-label="Edge"><svg><use href="#i-edge"/></svg></button>
        <button class="run" aria-label="File Explorer"><svg><use href="#i-folder"/></svg></button>
        <button aria-label="Store"><svg><use href="#i-store"/></svg></button>
        <button aria-label="Mail"><svg><use href="#i-mail"/></svg></button>
        <button aria-label="Dell"><svg viewBox="0 0 24 24"><path d="M0 0h24v24H0z" fill="#0a7dbb"/><circle cx="12" cy="12" r="7.500" fill="none" stroke="#fff"/><text x="12" y="14" class="dell">DELL</text></svg></button>
        <button class="run cur" aria-label="Excel"><svg><use href="#i-excel"/></svg></button>
        <button class="run" aria-label="Chrome"><svg><use href="#i-chrome"/></svg></button>
        <button class="run" aria-label="Notepad"><svg><use href="#i-note"/></svg></button>
      </div>
      <time class="clock last">5:10 PM<br>12/28/2020</time>
    </nav>
  </section>
</main>
<script src="sheet.js"></script>
</body>
</html>
```
FILE: sheet.js
```js
// Builds the worksheet grid: column letters, row numbers and the stock results.
const widths = [29, 110, 139, 127].concat(Array(14).fill(70));
const letters = ['', ...'ABCDEFGHIJKLMNOP', ''];
const stocks = [
  ['AY', '136,070,900', '8.9%'], ['CSIQ', '310,592,800', '33.1%'],
  ['DQ', '35,796,200', '199.4%'], ['ENPH', '221,772,100', '129.5%'],
  ['FSLR', '684,181,400', '101.3%'], ['HASI', '80,949,300', '25.8%'],
  ['JKS', '191,632,200', '53.9%'], ['RUN', '267,681,300', '5.5%'],
  ['SEDG', '206,885,200', '184.5%'], ['SPWR', '782,187,000', '23.1%'],
  ['TERP', '139,402,800', '-7.2%'], ['VSLR', '109,487,900', '50.0%']
];

document.getElementById('cols').innerHTML =
  widths.map(w => `<col style="width:${w}px">`).join('');
document.getElementById('letters').innerHTML =
  letters.map((l, i) => `<th scope="col" class="${i ? '' : 'corner'}${l === 'H' ? 'sel' : ''}">${l}</th>`).join('');

let html = '';
for (let r = 1; r <= 21; r++) {
  const stock = stocks[r - 4];
  let cells = ['', '', ''];
  let cls = ['', '', ''];
  if (r === 1) { cells[0] = 'All Stocks (2017)'; cls[0] = 'spill'; }
  if (r === 3) { cells = ['Ticker', 'Total Daily Volume', 'Return']; cls = ['head', 'head', 'head']; }
  if (stock) { cells = stock; cls = ['', 'num vol', 'num ' + (stock[2][0] === '-' ? 'down' : 'up')]; }
  html += `<tr><th scope="row" class="${r === 6 ? 'sel' : ''}">${r}</th>`;
  for (let c = 0; c < 17; c++) html += `<td class="${cls[c] || ''}">${cells[c] || ''}</td>`;
  html += '</tr>';
}
document.getElementById('rows').innerHTML = html;
```
FILE: styles.css
```css
* { box-sizing: border-box; }
body { margin: 0; background: #000; color: #333; font: 11px/16px "Open Sans", "Noto Sans", sans-serif; }
button, input { font: inherit; color: inherit; margin: 0; padding: 0; border: 0; background: none; outline: 0; }
input { min-width: 0; }
a { color: inherit; text-decoration: none; }
svg { display: block; flex: none; }
p, h2 { margin: 0; }
.sprite { position: absolute; width: 0; height: 0; }

.desktop { display: grid; grid-template-columns: 1366fr 1920fr; min-height: 100vh; align-items: start; }
.screen { position: relative; display: flex; flex-direction: column; }
.laptop { aspect-ratio: 1366 / 768; overflow: hidden; }
.monitor { height: 100vh; }

/* Excel window */
.excel { flex: 1; min-height: 0; display: flex; flex-direction: column; background: #e6e6e6; }
.titlebar { height: 34px; display: grid; grid-template-columns: 510fr 366fr 490fr; align-items: center; color: #b0d6c0; background: radial-gradient(ellipse 130px 50px at 74% 60%, #20643f 90%, transparent 92%), radial-gradient(ellipse 60px 40px at 67% 80%, #20643f 90%, transparent 92%), radial-gradient(ellipse 60px 30px at 86% 0, #20643f 90%, transparent 92%), radial-gradient(ellipse 26px 14px at 92% 100%, #20643f 90%, transparent 92%), #217346; }
.quick { display: grid; grid-template-columns: 57px 53px 30px 19px 20px 19px 16px 20px 23px 46px auto; padding-left: 23px; align-items: center; white-space: nowrap; }
.dim { color: #4f9770; }
.mid { display: inline-block; vertical-align: middle; }
.switch { width: 38px; height: 16px; border-radius: 8px; background: #fff; color: #217346; display: flex; align-items: center; justify-content: space-between; padding: 0 4px 0 6px; font-size: 10px; }
.switch i { width: 8px; height: 8px; border-radius: 50%; background: #217346; }
.tellme { height: 22px; background: #a0cdb5; display: flex; align-items: center; gap: 15px; padding-left: 18px; }
.tellme input { flex: 1; }
.tellme input::placeholder { color: #217346; opacity: 1; }
.account { display: flex; justify-content: flex-end; align-items: center; }
.account button { width: 46px; height: 32px; display: grid; place-items: center; }
.avatar { width: 24px; height: 24px; border-radius: 50%; background: #045c55; color: #e8f3ee; text-align: center; line-height: 24px; font-size: 10px; margin: 0 13px 0 10px; }

.tabrow { height: 34px; background: #f3f2f1; display: flex; align-items: center; gap: 8px; padding: 0 12px 2px 17px; font-size: 12px; color: #444; }
.tabs { flex: 1; display: grid; grid-template-columns: 52px 64px 61px 60px 101px 82px 56px 68px 55px 88px auto; line-height: 24px; white-space: nowrap; }
.tabs .on { font-weight: 600; color: #333; justify-self: start; border-bottom: 3px solid #217346; height: 27px; margin-bottom: -3px; }
.pill { height: 24px; border: 1px solid #e1dfdd; border-radius: 2px; background: #fff; color: #217346; font-weight: 600; display: flex; align-items: center; gap: 4px; padding: 0 7px; }

.ribbon { position: relative; z-index: 1; height: 92px; background: #f3f2f1; display: flex; box-shadow: 0 2px 4px #c4c4c4; color: #444; white-space: nowrap; }
.group { display: flex; flex-direction: column; height: 88px; border-right: 1px solid #b3b0ad; }
.code { width: 254px; padding-left: 6px; }
.addins { width: 152px; padding-left: 5px; }
.controls { width: 187px; padding-left: 6px; }
.xml { width: 239px; padding-left: 7px; }
.group h2 { flex: none; font-size: 11px; font-weight: 400; line-height: 16px; text-align: center; }
.tools { flex: none; height: 76px; display: flex; align-items: flex-start; }
.big { flex: none; width: 44px; padding-top: 1px; display: block; text-align: center; }
.addins .big { width: 46px; }
.big > svg { margin: 0 auto 4px; }
.big br + svg { margin: 4px auto 0; }
.stack { flex: none; display: flex; flex-direction: column; margin-left: 3px; }
.stack button { height: 24px; display: flex; align-items: center; gap: 3px; }
.stack.tight { margin-left: 2px; }
.xml .tight { width: 114px; }
.xml .tight:last-child { width: 60px; }
.stack.tight button { height: 23px; }
.stack button:disabled { color: #b1afad; }
.collapse { margin: auto 9px 4px auto; }

.formulabar { height: 47px; display: flex; align-items: center; padding: 2px 5px 0; }
.box { height: 26px; background: #fff; border: 1px solid #c6c6c6; display: flex; align-items: center; }
.namebox { width: 102px; padding-right: 6px; }
.namebox input, .formula input { flex: 1; }
.grip { width: 2px; height: 10px; border-top: 2px solid #aaa; border-bottom: 2px solid #aaa; position: relative; margin: 0 14px; }
.grip::after { content: ""; position: absolute; left: 0; top: 2px; width: 2px; height: 2px; background: #aaa; }
.fxbox { width: 110px; justify-content: space-around; }
.fx { font: italic 700 15px/20px "Liberation Serif", serif; color: #555; }
.fx sub { font-size: 11px; vertical-align: baseline; }
.formula { flex: 1; margin-left: 3px; padding-right: 4px; }
.dark { color: #555; }

.work { flex: 1; min-height: 0; display: flex; }
.sheet { position: relative; flex: 1; min-width: 0; overflow: hidden; border-right: 1px solid #999; border-bottom: 1px solid #999; background: #fff; }
.sheet table { table-layout: fixed; width: 0; border-collapse: separate; border-spacing: 0; font: 15px/20px Lato, "Open Sans", sans-serif; color: #000; }
.sheet th { background: #e6e6e6; font-weight: 400; padding: 0; border-right: 1px solid #b5b5b5; border-bottom: 1px solid #bcbcbc; height: 22px; }
.sheet thead th { height: 21px; line-height: 19px; border-bottom-color: #999; }
.sheet tbody th { border-right-color: #999; }
.sheet .corner { background: linear-gradient(135deg, #e6e6e6 70%, #b2b2b2 71%); }
.sheet th.sel { background: #d2d2d2; color: #217346; }
.sheet thead th.sel { border-bottom: 2px solid #217346; }
.sheet tbody th.sel { border-right: 2px solid #217346; }
.sheet td { padding: 0 2px; white-space: nowrap; border-right: 1px solid #d4d4d4; border-bottom: 1px solid #d4d4d4; }
.sheet td.spill { border-right-color: #fff; }
.sheet td.head { font-weight: 700; border-bottom-color: #000; }
.sheet td.num { text-align: right; font-size: 14px; }
.sheet td.vol { border-right-color: #0f0; }
.sheet td.up { background: #0f0; border-color: #0f0; }
.sheet td.down { background: #f00; border-color: #f00; }
.runbtn { position: absolute; left: 573px; top: 220px; width: 197px; height: 41px; background: #ececec; border-right: 2px solid #777; border-bottom: 2px solid #777; }
.vscroll { width: 21px; padding: 2px 4px 0 3px; display: flex; flex-direction: column; }
.vscroll button, .hscroll button { width: 15px; height: 15px; flex: none; background: #fff; border: 1px solid #ababab; display: grid; place-items: center; }
.thumb { background: #fff; border: 1px solid #ababab; }
.track { background: #dadada; }
.vscroll .thumb { flex: 416; }
.vscroll .track { flex: 23; }

.sheettabs { height: 29px; display: flex; align-items: center; border-bottom: 1px solid #c6c6c6; color: #444; font-size: 12px; }
.arrows { width: 99px; display: flex; gap: 25px; padding-left: 26px; }
.sheettabs > button { width: 52px; height: 20px; border-left: 1px solid #999; }
.sheettabs > .wide { width: 99px; }
.sheettabs > .active { width: 140px; height: 25px; align-self: flex-start; margin-top: -1px; padding-top: 2px; background: #fff; color: #217346; font-weight: 700; border-left: 1px solid #999; border-right: 1px solid #999; border-bottom: 2px solid #217346; }
.sheettabs > .plus { width: 18px; height: 18px; border: 0; margin: 0 auto 0 32px; }
.hscroll { width: 510px; display: flex; margin-right: 20px; }
.hscroll .thumb { flex: 450; height: 15px; }
.hscroll .track { flex: 30; height: 15px; }

.status { height: 21px; background: #f3f2f1; display: flex; align-items: center; color: #444; }
.rec { margin: 0 auto 0 8px; }
.status button { width: 40px; height: 21px; display: grid; place-items: center; }
.status .on { background: #c8c6c4; }
.sign { width: 16px; font-size: 16px; text-align: center; }
.status input { appearance: none; flex: none; width: 104px; height: 16px; background: linear-gradient(#999, #999) center / 100% 1px no-repeat; }
.status input::-webkit-slider-thumb { appearance: none; width: 5px; height: 14px; background: #777; }
.pct { width: 44px; padding-left: 8px; }

/* Message box */
.dialog { position: absolute; left: 534px; top: 325px; width: 314px; height: 133px; z-index: 2; background: #fff; border: 1px solid #6e6e6e; box-shadow: 0 5px 20px #0006; display: flex; flex-direction: column; color: #000; }
.dlghead { height: 30px; display: flex; align-items: center; justify-content: space-between; padding: 0 9px 0 8px; }
.dialog p { flex: 1; display: flex; align-items: center; padding-left: 11px; white-space: nowrap; }
.dlgfoot { height: 42px; background: #f0f0f0; display: flex; justify-content: flex-end; align-items: center; padding-right: 16px; }
.dlgfoot button { width: 73px; height: 21px; border: 2px solid #0078d7; background: #e1e1e1; outline: 1px dotted #000; outline-offset: -3px; line-height: 14px; }

/* Taskbars */
.taskbar { height: 40px; flex: none; display: flex; align-items: stretch; background: #d6dcea; color: #000; }
.taskbar button { width: 48px; display: grid; place-items: center; position: relative; }
.taskbar button svg { width: 24px; height: 24px; }
.dell { font-size: 5px; font-weight: 700; text-anchor: middle; fill: #fff; }
.tasksearch { width: 344px; background: #fff; border: 1px solid #c5c9d2; display: flex; align-items: center; padding-left: 8px; gap: 8px; font-size: 14px; }
.tasksearch input { flex: 1; }
.tasksearch input::placeholder { color: #333; opacity: 1; }
.apps { display: flex; gap: 1px; margin-left: 3px; }
.run::after { content: ""; position: absolute; left: 4px; right: 4px; bottom: 0; height: 2px; background: #0078d7; }
.taskbar .cur { background: #eef1f8; }
.cur::after { left: 0; right: 0; }
.tray { margin-left: auto; display: flex; align-items: center; gap: 16px; }
.tray svg { width: 16px; height: 16px; }
.clock { width: 74px; margin-left: 2px; text-align: center; line-height: 18px; padding-top: 2px; }
.clock.last { margin-left: auto; width: 66px; }
.taskbar .action { width: 44px; margin: 0 4px 0 0; padding-right: 13px; border-right: 1px solid #a9afbd; }

/* Wallpaper and File Explorer */
.wall { position: relative; flex: 1; min-height: 0; overflow: hidden; background: #0038b6; }
.wallpaper { position: absolute; inset: 0; width: 100%; height: 100%; }
.explorer { position: absolute; left: 1082px; top: 200px; width: 768px; height: 593px; background: #fff; border: 1px solid #2a4a86; box-shadow: 0 3px 12px #0006; display: flex; flex-direction: column; white-space: nowrap; }
.exhead { height: 30px; display: flex; align-items: center; padding-left: 9px; color: #999; }
.bar { width: 1px; height: 12px; background: #999; margin: 0 7px; }
.exhead .bar:nth-of-type(1) { margin-right: 12px; }
.exhead svg + svg { margin-left: 8px; }
.caption { margin-left: auto; display: flex; }
.caption button { width: 46px; height: 28px; display: grid; place-items: center; }
.extabs { height: 24px; display: flex; align-items: stretch; border-bottom: 1px solid #dadbdc; line-height: 23px; color: #222; }
.extabs a { width: 58px; padding-left: 13px; }
.extabs .file { width: 56px; background: #0065b3; color: #fff; padding: 0; text-align: center; }
.help { margin-left: auto; display: flex; align-items: center; gap: 12px; padding-right: 3px; }
.help button { width: 16px; height: 16px; border-radius: 50%; background: #0064c1; color: #fff; font-weight: 700; line-height: 16px; }
.exnav { height: 44px; display: flex; align-items: center; padding: 0 12px 3px 5px; color: #d2d2d2; }
.exnav > button { width: 30px; display: grid; place-items: center; flex: none; padding-right: 4px; }
.exnav .nar { width: 20px; padding-right: 0; }
.address { flex: 1; height: 30px; border: 1px solid #d9d9d9; display: flex; align-items: center; gap: 8px; padding-left: 4px; color: #000; }
.address span { flex: 1; }
.address button { width: 30px; height: 28px; display: grid; place-items: center; margin-left: -8px; }
.address .refresh { border-left: 1px solid #d9d9d9; }
.exsearch { width: 150px; height: 30px; margin-left: 12px; border: 1px solid #d9d9d9; display: flex; align-items: center; gap: 12px; padding-left: 14px; }
.exsearch input { flex: 1; }
.exsearch input::placeholder { color: #666; opacity: 1; }
.exlist { flex: 1; margin: 0 1px; border-top: 1px solid #a8a8a8; }
.exlist table { width: 100%; table-layout: fixed; border-collapse: separate; border-spacing: 0; color: #4c607a; }
.exlist th { height: 25px; font-weight: 400; text-align: left; padding: 0 0 0 6px; border-left: 1px solid #e5e5e5; position: relative; }
.exlist .c-name { width: 269px; border: 0; padding-left: 9px; }
.c-name input { appearance: none; width: 13px; height: 13px; border: 1px solid #333; vertical-align: middle; margin: 0 10px 0 0; }
.sort { position: absolute; left: 137px; top: 0; }
.c-status { width: 80px; }
.c-date { width: 144px; }
.c-type { width: 120px; }
.c-size { width: 80px; }
.exlist p { text-align: center; color: #6d6d6d; padding-top: 15px; }
.exstatus { height: 24px; display: flex; align-items: center; padding: 0 4px 0 13px; color: #222; }
.exstatus span { flex: 1; }
.exstatus button { width: 22px; height: 23px; display: grid; place-items: center; }
.exstatus .on { background: #cce8f6; border: 1px solid #26a0da; }
```
